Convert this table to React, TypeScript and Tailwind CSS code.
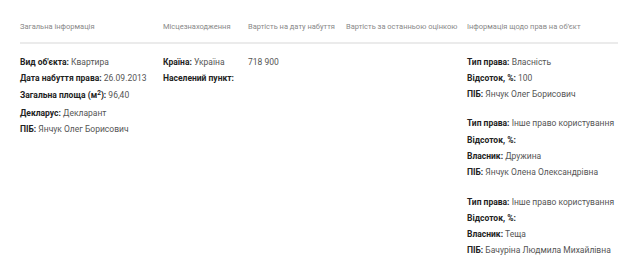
import React from 'react';

const headers = [
  'Загальна інформація',
  'Місцезнаходження',
  'Вартість на дату набуття',
  'Вартість за останньою оцінкою',
  'Інформація щодо прав на об’єкт',
];

const rights = [
  [
    ['Тип права', 'Власність'],
    ['Відсоток, %', '100'],
    ['ПІБ', 'Янчук Олег Борисович'],
  ],
  [
    ['Тип права', 'Інше право користування'],
    ['Відсоток, %', ''],
    ['Власник', 'Дружина'],
    ['ПІБ', 'Янчук Олена Олександрівна'],
  ],
  [
    ['Тип права', 'Інше право користування'],
    ['Відсоток, %', ''],
    ['Власник', 'Теща'],
    ['ПІБ', 'Бачуріна Людмила Михайлівна'],
  ],
];

function Field({ label, value }: { label: React.ReactNode; value?: string }) {
  return (
    <div className="whitespace-nowrap">
      <span className="font-bold text-[#222]">{label}:</span>
      {value ? <span className="text-[#555]"> {value}</span> : null}
    </div>
  );
}

export default function App() {
  return (
    <div
      className="w-[640px] h-[267px] overflow-hidden bg-white pl-[20px] pr-[22px]"
      style={{ fontFamily: 'Roboto, "Noto Sans", sans-serif' }}
    >
      <div className="grid grid-cols-[143px_85px_98px_121px_1fr] pt-[22px] pb-[10px] border-b-2 border-[#ebebeb] text-[7.5px] leading-[10px] text-[#888]">
        {headers.map((h) => (
          <div key={h} className="whitespace-nowrap">
            {h}
          </div>
        ))}
      </div>

      <div className="grid grid-cols-[143px_85px_98px_121px_1fr] pt-[9.5px] text-[8.5px] leading-[16.3px]">
        <div>
          <Field label="Вид об'єкта" value="Квартира" />
          <Field label="Дата набуття права" value="26.09.2013" />
          <div className="whitespace-nowrap leading-[19px]">
            <span className="font-bold text-[#222]">
              Загальна площа (м<sup className="text-[6.5px]">2</sup>):
            </span>
            <span className="text-[#555]"> 96,40</span>
          </div>
          <Field label="Декларус" value="Декларант" />
          <Field label="ПІБ" value="Янчук Олег Борисович" />
        </div>

        <div>
          <Field label="Країна" value="Україна" />
          <Field label="Населений пункт" />
        </div>

        <div className="text-[#555]">718 900</div>

        <div />

        <div className="flex flex-col gap-[13px]">
          {rights.map((group, i) => (
            <div key={i}>
              {group.map(([l, v], j) => (
                <Field key={j} label={l} value={v} />
              ))}
            </div>
          ))}
        </div>
      </div>
    </div>
  );
}
